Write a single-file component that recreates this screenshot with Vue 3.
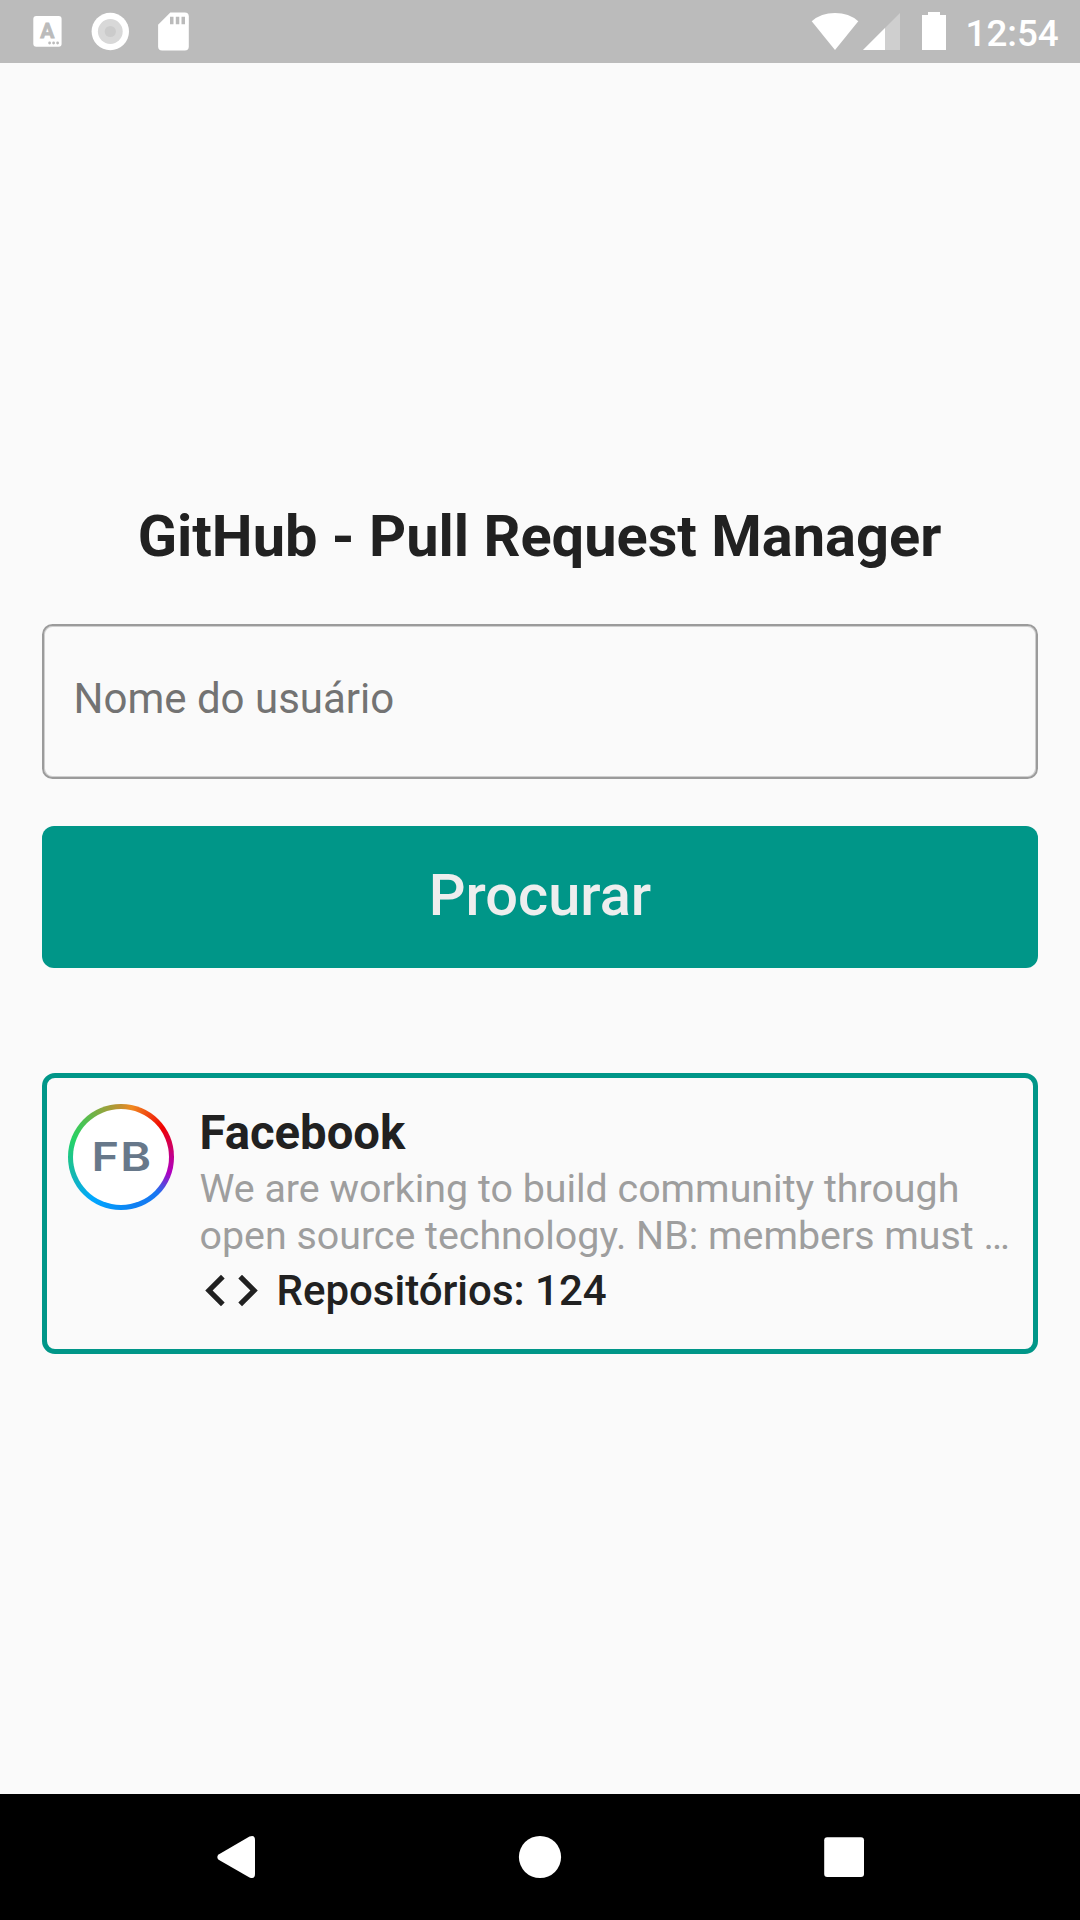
<script setup>
const user = {
  initials: 'FB',
  name: 'Facebook',
  bio: ['We are working to build community through', 'open source technology. NB: members must …'],
  repos: 124,
}
</script>

<template>
  <div class="screen">
    <header class="status">
      <svg class="notifications" width="200" height="63" viewBox="0 0 200 63">
        <rect x="33.3" y="16" width="28.3" height="30.8" rx="3" fill="#fff" />
        <text class="badge" x="47.3" y="38.3" text-anchor="middle">A</text>
        <g fill="#bbb">
          <circle cx="49.6" cy="43" r="1.4" />
          <circle cx="53.6" cy="43" r="1.4" />
          <circle cx="57.6" cy="43" r="1.4" />
        </g>
        <circle cx="110.3" cy="31.5" r="18.7" fill="#fff" />
        <circle cx="110.3" cy="31.5" r="12.4" fill="#d8d8d8" />
        <circle cx="110.3" cy="31.5" r="5.6" fill="#cbcbcb" />
        <path
          fill="#fff"
          d="M170.3 12.6h14.5a4 4 0 0 1 4 4v30a4 4 0 0 1-4 4h-22.7a4 4 0 0 1-4-4V24.7z"
        />
        <path fill="#bbb" d="M170 16.7h3.5v7.6H170zM175.8 16.7h3.5v7.6h-3.5zM181.5 16.7h3.5v7.6h-3.5z" />
      </svg>
      <div class="system">
        <svg width="150" height="63" viewBox="806 0 150 63">
          <path fill="#fff" d="M811.7 21.2Q821 13 835 13T858.3 21.2L835 50z" />
          <path fill="#cfcfcf" d="M863 50L900 13V50z" />
          <path fill="#fff" d="M863 50L885 28V50z" />
          <path fill="#fff" d="M922 15h6v-3h12v3h6v35h-24z" />
        </svg>
        <span class="clock">12:54</span>
      </div>
    </header>

    <main class="content">
      <h1 class="title">GitHub - Pull Request Manager</h1>
      <div class="field"><span class="label">Nome do usuário</span></div>
      <button class="search"><span class="search-text">Procurar</span></button>

      <section class="card">
        <div class="avatar"><span class="initials">{{ user.initials }}</span></div>
        <div class="info">
          <h2 class="name">{{ user.name }}</h2>
          <p v-for="line in user.bio" :key="line" class="bio">{{ line }}</p>
          <div class="repos">
            <svg width="63" height="63" viewBox="0 0 24 24" fill="#212121">
              <path
                d="M9.4 16.6L4.8 12l4.6-4.6L8 6l-6 6 6 6 1.4-1.4zm5.2 0l4.6-4.6-4.6-4.6L16 6l6 6-6 6-1.4-1.4z"
              />
            </svg>
            <span class="count">Repositórios: {{ user.repos }}</span>
          </div>
        </div>
      </section>
    </main>

    <nav class="nav">
      <svg width="1080" height="126" viewBox="0 0 1080 126" fill="#fff">
        <path d="M218.6 60.6L249.5 42.6Q255 40.5 255 46V80Q255 85.5 249.5 83.4L218.6 65.8Q216 63.2 218.6 60.6z" />
        <circle cx="540" cy="63" r="21.1" />
        <rect x="824.2" y="43.2" width="39.8" height="39.8" rx="3" />
      </svg>
    </nav>
  </div>
</template>

<style>
body {
  margin: 0;
}
</style>

<style scoped>
.screen {
  width: 1080px;
  height: 1920px;
  display: flex;
  flex-direction: column;
  background: #fafafa;
  color: #212121;
  font-family: Roboto, 'Liberation Sans', sans-serif;
  overflow: hidden;
}
h1,
h2,
p {
  margin: 0;
  white-space: nowrap;
}
svg {
  display: block;
  flex: none;
}
.status {
  height: 63px;
  flex: none;
  display: flex;
  justify-content: space-between;
  background: #bbb;
}
.badge {
  font: 700 21px Roboto, sans-serif;
  fill: #bbb;
  stroke: #bbb;
  stroke-width: 0.8px;
}
.system {
  display: flex;
  width: 274px;
}
.clock {
  margin-left: 9.5px;
  color: #fff;
  font-size: 36.75px;
  font-weight: 500;
  line-height: 67px;
}
.content {
  flex: 1;
  display: flex;
  flex-direction: column;
  padding: 439px 42px 0;
}
.title {
  margin-left: -1px;
  font-size: 57.75px;
  font-weight: 700;
  line-height: 68px;
  text-align: center;
}
.field {
  box-sizing: border-box;
  height: 155px;
  margin-top: 54px;
  padding: 0 0 6px 29.5px;
  display: flex;
  align-items: center;
  border: 2px solid #9b9b9b;
  box-shadow: inset 0 0 0 1px #cfcfcf;
  border-radius: 10.5px;
}
.label {
  color: #737373;
  font-size: 42px;
  line-height: 50px;
}
.search {
  height: 142px;
  margin-top: 47px;
  padding: 0 0 4px;
  border: 0;
  border-radius: 12px;
  background: #009688;
  color: #eee;
  font-family: inherit;
}
.search-text {
  font-size: 57.75px;
  font-weight: 500;
  line-height: 68px;
}
.card {
  box-sizing: border-box;
  height: 281px;
  margin-top: 105px;
  padding: 26px 0 0 21px;
  display: flex;
  border: 5px solid #009688;
  border-radius: 13px;
}
.avatar {
  box-sizing: border-box;
  width: 105.5px;
  height: 105.5px;
  flex: none;
  display: flex;
  align-items: center;
  justify-content: center;
  border: 5px solid transparent;
  border-radius: 50%;
  background:
    linear-gradient(#fff, #fff) padding-box,
    conic-gradient(#c49030 0deg, #f08a20 12deg, #f00000 55deg, #c00090 90deg, #b000c0 108deg, #1877f2 135deg, #0f80f2 165deg, #00a8ff 215deg, #15b8b0 250deg, #25d366 290deg, #50c050 315deg, #c49030 360deg) border-box;
}
.initials {
  color: #67788a;
  font: 600 40px/48px Inter, sans-serif;
  letter-spacing: 1px;
  transform: translateX(1px) scaleX(1.17);
}
.info {
  margin-left: 26px;
}
.name {
  padding-top: 1px;
  font-size: 47.25px;
  font-weight: 700;
  line-height: 56px;
  margin-bottom: 4px;
}
.bio {
  color: #9e9e9e;
  font-size: 39.375px;
  line-height: 47px;
}
.repos {
  display: flex;
  align-items: center;
}
.count {
  margin-left: 14px;
  font-size: 42px;
  font-weight: 500;
  line-height: 50px;
  white-space: nowrap;
}
.nav {
  height: 126px;
  flex: none;
  background: #000;
}
</style>
